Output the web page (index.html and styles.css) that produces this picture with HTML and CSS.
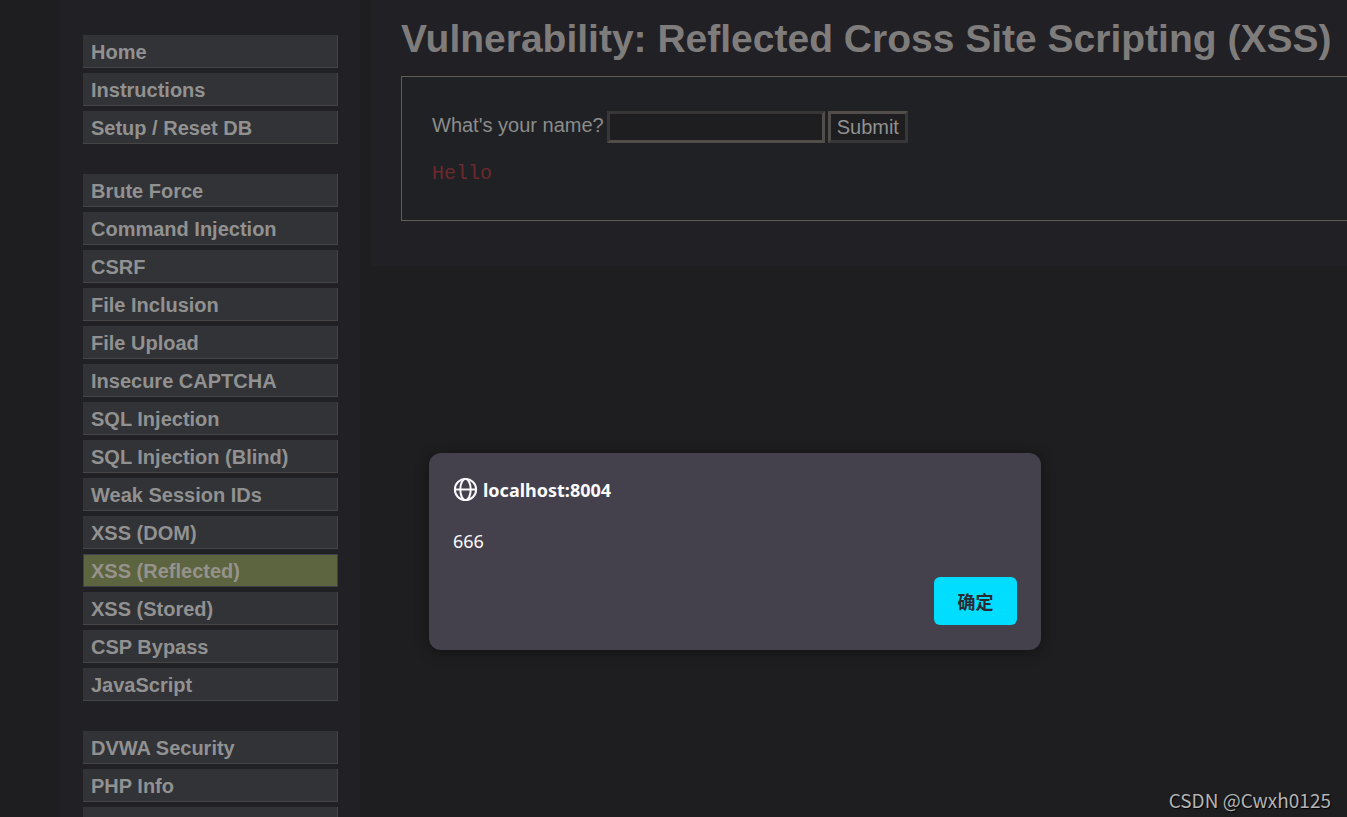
FILE: index.html
```html
<!DOCTYPE html>
<html lang="en">
<head>
<meta charset="utf-8">
<title>Vulnerability: Reflected Cross Site Scripting (XSS)</title>
<link rel="stylesheet" href="styles.css">
</head>
<body>
<div class="page">
  <nav class="sidebar">
    <ul class="menu">
      <li><a href="#">Home</a></li>
      <li><a href="#">Instructions</a></li>
      <li><a href="#">Setup / Reset DB</a></li>
    </ul>
    <ul class="menu">
      <li><a href="#">Brute Force</a></li>
      <li><a href="#">Command Injection</a></li>
      <li><a href="#">CSRF</a></li>
      <li><a href="#">File Inclusion</a></li>
      <li><a href="#">File Upload</a></li>
      <li><a href="#">Insecure CAPTCHA</a></li>
      <li><a href="#">SQL Injection</a></li>
      <li><a href="#">SQL Injection (Blind)</a></li>
      <li><a href="#">Weak Session IDs</a></li>
      <li><a href="#">XSS (DOM)</a></li>
      <li><a class="selected" href="#">XSS (Reflected)</a></li>
      <li><a href="#">XSS (Stored)</a></li>
      <li><a href="#">CSP Bypass</a></li>
      <li><a href="#">JavaScript</a></li>
    </ul>
    <ul class="menu">
      <li><a href="#">DVWA Security</a></li>
      <li><a href="#">PHP Info</a></li>
      <li><a href="#">&nbsp;</a></li>
    </ul>
  </nav>
  <main class="content">
    <h1>Vulnerability: Reflected Cross Site Scripting (XSS)</h1>
    <section class="panel">
      <form class="name-form">
        <label for="name">What's your name?</label>
        <input id="name" type="text">
        <button type="button">Submit</button>
      </form>
      <pre class="output">Hello</pre>
    </section>
  </main>
</div>
<div class="dialog" role="alertdialog" aria-labelledby="origin" aria-describedby="message">
  <div class="dialog-head">
    <svg class="globe" viewBox="0 0 24 24" fill="none" stroke="currentColor" stroke-width="1.9" aria-hidden="true">
      <circle cx="12" cy="12" r="10.2"/>
      <ellipse cx="12" cy="12" rx="5" ry="10.2"/>
      <path d="M1.8 12H22.2"/>
    </svg>
    <span id="origin">localhost:8004</span>
  </div>
  <p class="message" id="message">666</p>
  <div class="dialog-actions"><button class="ok" type="button" lang="zh-CN">确定</button></div>
</div>
<div class="watermark">CSDN @Cwxh0125</div>
</body>
</html>
```
FILE: styles.css
```css
* { box-sizing: border-box; }
body {
  margin: 0;
  background: #1e1e20;
  color: #8c8c8c;
  font: 20px/24px "Liberation Sans", Arial, sans-serif;
}
.page {
  display: flex;
  align-items: flex-start;
  gap: 11px;
  height: 100vh;
  padding-left: 60px;
  overflow: hidden;
}
.sidebar {
  flex: 0 0 300px;
  display: flex;
  flex-direction: column;
  gap: 30px;
  padding: 35px 22px 35px 23px;
  background: #212025;
}
.menu {
  display: flex;
  flex-direction: column;
  gap: 5px;
  margin: 0;
  padding: 0;
  list-style: none;
}
.menu a {
  display: block;
  height: 33px;
  padding: 5px 8px 3px;
  border: solid #454545;
  border-width: 0 1px 1px 0;
  background: #323336;
  color: #919191;
  font-weight: bold;
  text-decoration: none;
}
.menu a.selected {
  padding: 4px 7px 3px;
  border: 1px solid #40404c;
  background: #5c6440;
  color: #96928c;
}
.content {
  flex: 1;
  min-width: 0;
  padding: 15px 0 45px 30px;
  background: #212025;
}
h1 {
  margin: 0 0 13px;
  color: #7f7c7c;
  font-size: 39px;
  line-height: 48px;
  white-space: nowrap;
}
.panel {
  padding: 34px 30px;
  border: 1px solid #625f5a;
  border-right: 0;
  background: #202124;
}
.name-form {
  display: flex;
  align-items: center;
  gap: 3px;
}
.name-form label { padding-bottom: 4px; }
.name-form input {
  width: 218px;
  height: 32px;
  padding: 0 4px;
  border: 3px solid;
  border-color: #383636 #514d4a #514d4a #383636;
  background: #1e1e20;
  color: #919191;
  font: inherit;
}
.name-form button {
  height: 32px;
  padding: 0 6px;
  border: 3px solid;
  border-color: #514d4a #383636 #383636 #514d4a;
  background: #1e1e20;
  color: #919191;
  font: inherit;
}
.output {
  margin: 19px 0 0;
  color: #6c292e;
  font: 20px/24px "Liberation Mono", "Courier New", monospace;
}
.dialog {
  position: absolute;
  top: 453px;
  left: 429px;
  width: 612px;
  padding: 24px 24px 25px;
  border-radius: 12px;
  background: #44414d;
  color: #fbfbfe;
  font-family: "Noto Sans", "Noto Sans CJK SC", sans-serif;
  font-size: 18px;
  box-shadow: 0 2px 14px rgba(0, 0, 0, 0.4);
}
.dialog-head {
  display: flex;
  align-items: center;
  gap: 5px;
  font-weight: bold;
}
.globe { width: 25px; height: 25px; }
.message {
  margin: 27px 0 24px;
}
.dialog-actions {
  display: flex;
  justify-content: flex-end;
}
.ok {
  width: 83px;
  height: 48px;
  border: 0;
  border-radius: 6px;
  background: #00ddff;
  color: #2b2a33;
  font: bold 18px "Noto Sans CJK SC", sans-serif;
}
.watermark {
  position: absolute;
  right: 16px;
  bottom: 5px;
  color: #b4b4b4;
  font-family: "Noto Sans CJK SC", sans-serif;
  font-size: 19px;
  text-shadow: 1px 1px 1px #000;
}
```
